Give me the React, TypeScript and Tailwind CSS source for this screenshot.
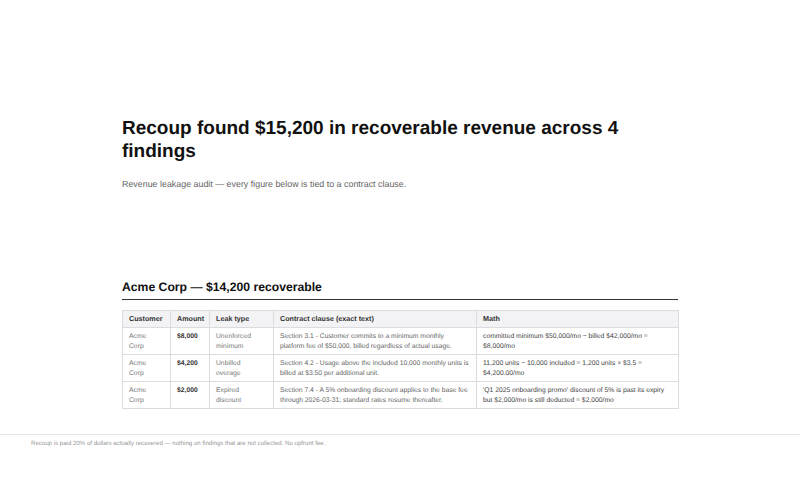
import React from 'react';

type Finding = {
  customer: string;
  amount: string;
  leak: string;
  clause: string;
  math: string;
};

const findings: Finding[] = [
  {
    customer: 'Acme Corp',
    amount: '$8,000',
    leak: 'Unenforced minimum',
    clause: 'Section 3.1 - Customer commits to a minimum monthly platform fee of $50,000, billed regardless of actual usage.',
    math: 'committed minimum $50,000/mo − billed $42,000/mo = $8,000/mo',
  },
  {
    customer: 'Acme Corp',
    amount: '$4,200',
    leak: 'Unbilled overage',
    clause: 'Section 4.2 - Usage above the included 10,000 monthly units is billed at $3.50 per additional unit.',
    math: '11,200 units − 10,000 included = 1,200 units × $3.5 = $4,200.00/mo',
  },
  {
    customer: 'Acme Corp',
    amount: '$2,000',
    leak: 'Expired discount',
    clause: 'Section 7.4 - A 5% onboarding discount applies to the base fee through 2026-03-31; standard rates resume thereafter.',
    math: "'Q1 2025 onboarding promo' discount of 5% is past its expiry but $2,000/mo is still deducted = $2,000/mo",
  },
];

const th = 'border border-[#dcdcdf] bg-[#f3f3f5] pl-[6px] pr-[4px] py-[3.5px] text-left align-top text-[7.2px] leading-[9px] font-bold text-[#333]';
const td = 'border border-[#dcdcdf] pl-[6px] pt-[4.5px] pb-[2.5px] align-top text-[6.75px] leading-[9.5px]';

const App: React.FC = () => {
  return (
    <div className="min-h-[500px] bg-white font-['Liberation_Sans',Arial,sans-serif] [text-rendering:geometricPrecision]">
      <main className="mx-auto w-[556px] pt-[118px]">
        <header>
          <h1 className="text-[19px] leading-[22.5px] font-bold text-[#111]">
            Recoup found $15,200 in recoverable revenue across 4 findings
          </h1>
          <p className="mt-[15px] text-[8.9px] leading-[13.5px] text-[#666]">
            Revenue leakage audit — every figure below is tied to a contract clause.
          </p>
        </header>

        <section className="mt-[88px]">
          <h2 className="border-b border-[#333] pb-[4px] text-[12.2px] leading-[15px] font-bold text-[#111]">
            Acme Corp — $14,200 recoverable
          </h2>
          <table className="mt-[10px] w-full table-fixed border-collapse">
            <colgroup>
              <col className="w-[48px]" />
              <col className="w-[39px]" />
              <col className="w-[64px]" />
              <col className="w-[203px]" />
              <col className="w-[202px]" />
            </colgroup>
            <thead>
              <tr>
                <th className={th}>Customer</th>
                <th className={th}>Amount</th>
                <th className={th}>Leak type</th>
                <th className={th}>Contract clause (exact text)</th>
                <th className={th}>Math</th>
              </tr>
            </thead>
            <tbody>
              {findings.map((f) => (
                <tr key={f.amount}>
                  <td className={`${td} pr-[10px] text-[#777]`}>{f.customer}</td>
                  <td className={`${td} pr-[4px] font-bold text-[#333]`}>{f.amount}</td>
                  <td className={`${td} pr-[10px] text-[#777]`}>{f.leak}</td>
                  <td className={`${td} pr-[6px] text-[#666]`}>{f.clause}</td>
                  <td className={`${td} pr-[8px] text-[#444]`}>{f.math}</td>
                </tr>
              ))}
            </tbody>
          </table>
        </section>
      </main>

      <footer className="mt-[25px] border-t border-[#e6e6e6] px-[31px] pt-[4.5px]">
        <p className="text-[6.1px] leading-[9px] text-[#999]">
          Recoup is paid 20% of dollars actually recovered — nothing on findings that are not collected. No upfront fee.
        </p>
      </footer>
    </div>
  );
};

export default App;
